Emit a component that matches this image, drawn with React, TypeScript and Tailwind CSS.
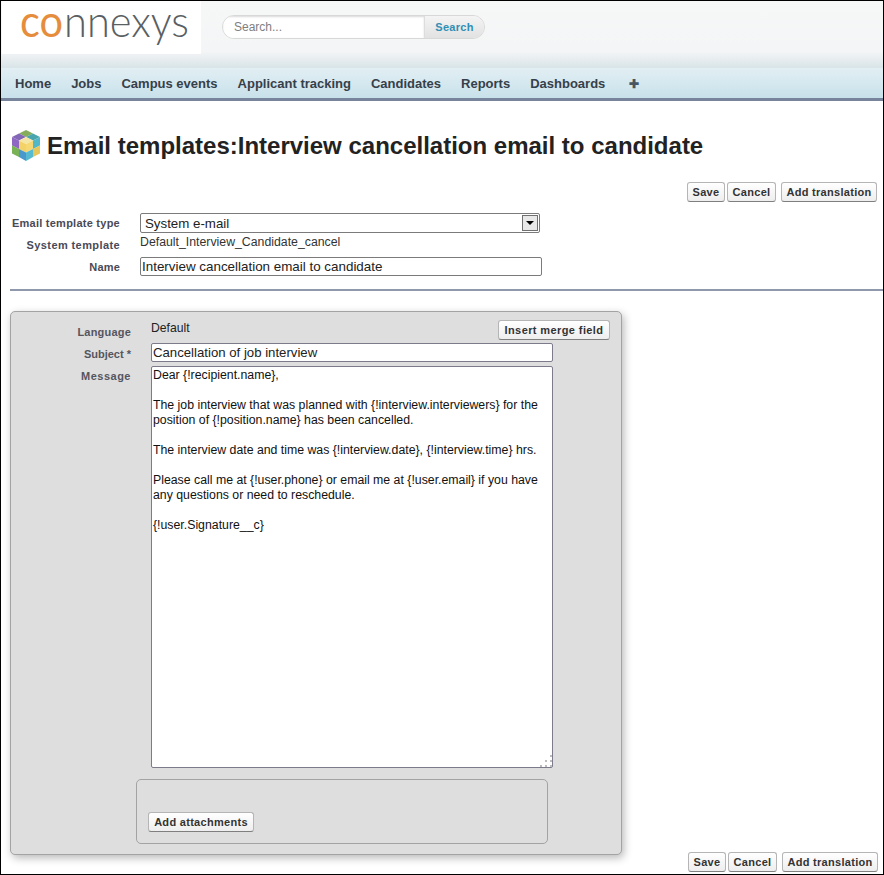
const navItems = ["Home", "Jobs", "Campus events", "Applicant tracking", "Candidates", "Reports", "Dashboards"];

const message = `Dear {!recipient.name},

The job interview that was planned with {!interview.interviewers} for the position of {!position.name} has been cancelled.

The interview date and time was {!interview.date}, {!interview.time} hrs.

Please call me at {!user.phone} or email me at {!user.email} if you have any questions or need to reschedule.

{!user.Signature__c}`;

function Btn({ children, className = "" }: { children: React.ReactNode; className?: string }) {
  return (
    <button className={`h-5 rounded-[3px] border border-[#b5b5b5] border-b-[#7f7f7f] bg-gradient-to-b from-white to-[#eeeeee] text-[11px] font-bold tracking-[0.3px] leading-none text-[#333333] ${className}`}>
      {children}
    </button>
  );
}

function ActionButtons() {
  return (
    <div className="flex">
      <Btn className="w-[38px]">Save</Btn>
      <Btn className="ml-[2px] w-[49px]">Cancel</Btn>
      <Btn className="ml-[5px] w-[96px]">Add translation</Btn>
    </div>
  );
}

function Logo() {
  return (
    <svg width="199" height="53" viewBox="0 0 199 53" className="ml-px shrink-0 bg-white">
      <text x="18" y="36" fontFamily="Lato, sans-serif" fontSize="44" fontWeight="400" fill="#e58d3c" textLength="43" lengthAdjust="spacingAndGlyphs">
        co
      </text>
      <text x="62" y="36" fontFamily="Lato, sans-serif" fontSize="44" fontWeight="300" fill="#5a5f63" textLength="125" lengthAdjust="spacingAndGlyphs">
        nnexys
      </text>
    </svg>
  );
}

function CubeIcon() {
  return (
    <svg width="28" height="31" viewBox="0 0 28 31" className="shrink-0">
      <polygon points="14,0 21,3.5 14,7 7,3.5" fill="#86ad5c" />
      <polygon points="7,3.5 14,7 7,10.5 0,7" fill="#8468b8" />
      <polygon points="21,3.5 28,7 21,10.5 14,7" fill="#4aa6ae" />
      <polygon points="14,7 21,10.5 14,14 7,10.5" fill="#f6e6a6" />
      <polygon points="0,7 7,10.5 7,19 0,15.5" fill="#8f68c4" />
      <polygon points="7,10.5 14,14 14,22.5 7,19" fill="#f3d368" />
      <polygon points="14,14 21,10.5 21,19 14,22.5" fill="#f5d873" />
      <polygon points="21,10.5 28,7 28,15.5 21,19" fill="#52b8c8" />
      <polygon points="0,15.5 7,19 7,27 0,23.5" fill="#79b356" />
      <polygon points="7,19 14,22.5 14,31 7,27" fill="#4a98cc" />
      <polygon points="14,22.5 21,19 21,27 14,31" fill="#56bad0" />
      <polygon points="21,19 28,15.5 28,23.5 21,27" fill="#e6c75c" />
    </svg>
  );
}

export default function App() {
  return (
    <div className="h-[875px] w-[884px] overflow-hidden border border-black bg-white font-['Liberation_Sans',Arial,sans-serif] text-black">
      {/* header */}
      <div className="h-[67px] bg-gradient-to-b from-[#f6f7f7] via-[#f4f5f6] via-75% to-[#d9e4e8]">
        <div className="flex items-start">
          <Logo />
          <div className="ml-[21px] mt-[14px] flex h-6 w-[263px] overflow-hidden rounded-full border border-[#d8d8d8]">
            <input
              readOnly
              placeholder="Search..."
              className="h-full w-[201px] bg-white pl-[11px] text-xs text-[#777777] shadow-[inset_0_1px_2px_rgba(0,0,0,0.15)] outline-none placeholder:text-[#808080]"
            />
            <div className="flex flex-1 items-center justify-center border-l border-[#dddddd] bg-gradient-to-b from-[#f4f4f4] to-[#e2e2e2] text-[11px] font-bold tracking-[0.3px] text-[#2f8fb5]">
              Search
            </div>
          </div>
        </div>
      </div>

      {/* nav */}
      <nav className="flex h-[33px] items-center border-b-[3px] border-[#78849c] bg-gradient-to-b from-[#e2eff4] to-[#c8e1ea] pl-[14px] pt-[2px] text-[13px] font-bold text-[#36404a]">
        {navItems.map((item) => (
          <span key={item} className="mr-5">
            {item}
          </span>
        ))}
        <span className="ml-[4px] text-[12px] leading-none text-[#4a5560]">✚</span>
      </nav>

      {/* title */}
      <div className="ml-[11px] mt-[29px] flex h-[31px] items-center">
        <CubeIcon />
        <h1 className="ml-[7px] text-2xl font-bold text-[#222222]">
          Email templates:Interview cancellation email to candidate
        </h1>
      </div>

      <div className="mr-[6px] mt-[21px] flex justify-end">
        <ActionButtons />
      </div>

      {/* top form */}
      <div className="mt-[11px] grid grid-cols-[119px_1fr] gap-x-5">
        <label className="flex h-5 items-center justify-end text-[11px] font-bold tracking-[0.25px] text-[#4a4a56]">
          Email template type
        </label>
        <div className="flex h-[20px] w-[400px] items-center justify-between rounded-[2px] border border-[#7b7b7b] bg-white pl-1 pr-px">
          <span className="pt-px text-[13.3px] text-[#222222]">System e-mail</span>
          <span className="flex h-4 w-4 items-center justify-center border border-[#707070] bg-[#e8e8e8]">
            <span className="h-0 w-0 border-x-4 border-t-4 border-x-transparent border-t-black" />
          </span>
        </div>
        <label className="mt-[4px] flex h-4 items-center justify-end text-[11px] font-bold tracking-[0.4px] text-[#4a4a56]">
          System template
        </label>
        <div className="mt-[1px] text-[12.3px] leading-[17px] text-[#333333]">Default_Interview_Candidate_cancel</div>
        <label className="mt-[4px] flex h-[19px] items-center justify-end pt-[2px] text-[11px] font-bold tracking-[0.2px] text-[#4a4a56]">
          Name
        </label>
        <input
          readOnly
          value="Interview cancellation email to candidate"
          className="mt-[4px] h-[19px] w-[402px] rounded-[2px] border border-[#7b7b7b] bg-white pl-[1px] pt-px text-[13.4px] text-[#222222] outline-none"
        />
      </div>

      <div className="ml-[9px] mt-[13px] h-[2px] bg-[#8f99ab]" />

      {/* panel + bottom buttons */}
      <div className="mt-5 flex items-end pl-[9px] pr-[5px]">
        <div className="h-[544px] w-[612px] rounded-[5px] border border-[#a3a3a3] bg-[#dedede] shadow-[2px_3px_8px_rgba(0,0,0,0.28)]">
          <div className="grid grid-cols-[120px_402px] gap-x-5">
            <label className="mt-[12px] text-right text-[11px] font-bold leading-4 tracking-[0.2px] text-[#555560]">
              Language
            </label>
            <div className="mt-[8px] flex h-[23px] items-start text-[12.2px] leading-4 text-[#222222]">Default</div>
            <label className="h-[19px] pt-[2px] text-right text-[11px] font-bold leading-[19px] text-[#555560]">
              Subject *
            </label>
            <input
              readOnly
              value="Cancellation of job interview"
              className="h-[19px] rounded-[2px] border border-[#7b7b8b] bg-white pl-[1px] pt-px text-[13.2px] text-[#222222] outline-none"
            />
            <label className="mt-[6px] text-right text-[11px] font-bold leading-4 tracking-[0.5px] text-[#555560]">
              Message
            </label>
            <div className="relative mt-[4px] h-[402px]">
              <textarea
                readOnly
                defaultValue={message}
                className="block h-full w-full resize-none rounded-[2px] border border-[#7b7b8b] bg-white pl-[1px] pt-[1px] text-[12.3px] leading-[15px] text-[#111111] outline-none"
              />
              <svg width="12" height="12" viewBox="0 0 12 12" className="absolute bottom-[1px] right-[1px]">
                <g fill="#bdbdbd">
                  <rect x="10" y="0" width="2" height="2" />
                  <rect x="5" y="5" width="2" height="2" />
                  <rect x="10" y="5" width="2" height="2" />
                  <rect x="0" y="10" width="2" height="2" />
                  <rect x="5" y="10" width="2" height="2" />
                  <rect x="10" y="10" width="2" height="2" />
                </g>
              </svg>
            </div>
          </div>
          <div className="relative">
            <Btn className="absolute -top-[448px] left-[487px] w-[112px] tracking-[0.4px]">Insert merge field</Btn>
          </div>
          <div className="ml-[125px] mt-[11px] flex h-[65px] w-[412px] items-end rounded-[5px] border border-[#a3a3a3] bg-[#dedede] pb-[11px] pl-[11px]">
            <Btn className="w-[106px]">Add attachments</Btn>
          </div>
        </div>
        <div className="-mb-[17px] ml-auto">
          <ActionButtons />
        </div>
      </div>
    </div>
  );
}
